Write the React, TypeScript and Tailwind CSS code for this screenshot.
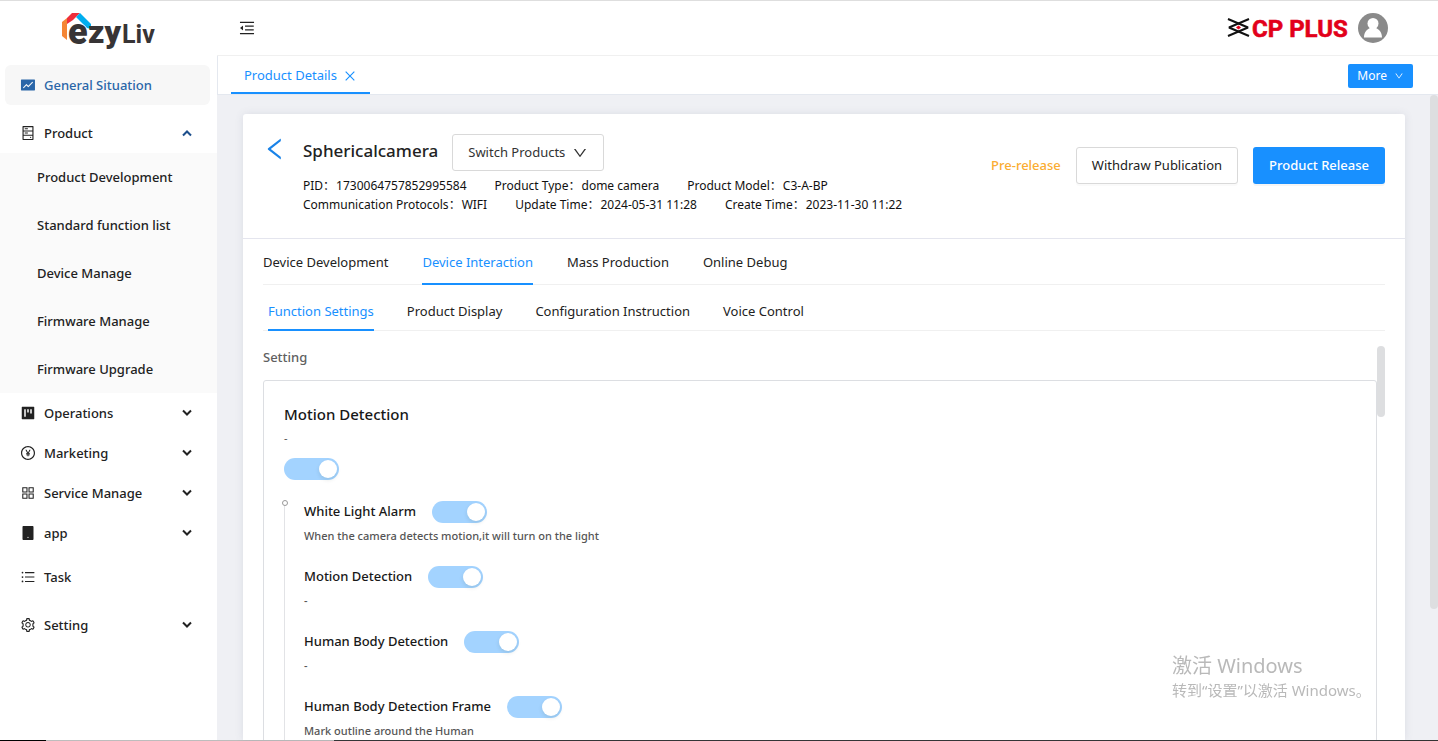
import type { ReactNode } from "react";
import {
  AiFillFund,
  AiFillProject,
  AiFillTablet,
  AiOutlineAppstore,
  AiOutlineClose,
  AiOutlineDown,
  AiOutlineHdd,
  AiOutlineLeft,
  AiOutlineMenuFold,
  AiOutlinePayCircle,
  AiOutlineSetting,
  AiOutlineUnorderedList,
} from "react-icons/ai";

function EzyLivLogo() {
  return (
    <svg width="94" height="42" viewBox="0 0 94 42" role="img" aria-label="ezyLiv">
      <polygon points="1,10 6,6 6,28 1,24" fill="#f58634" />
      <polygon points="6,12 6,6 11,1 19,1 12,8" fill="#ee2e3b" />
      <polygon points="15,5 19,1 30,12 30,17 26,16" fill="#00aeef" />
      <g fontFamily="Roboto, sans-serif" fontWeight="900" fill="#373435">
        <text x="7" y="32" fontSize="36" stroke="#ffffff" strokeWidth="1" paintOrder="stroke">e</text>
        <text x="27" y="31" fontSize="32">zy</text>
        <text x="61" y="31" fontSize="25" fontWeight="700">Liv</text>
      </g>
    </svg>
  );
}

function CpPlusLogo() {
  return (
    <svg width="122" height="30" viewBox="0 0 122 30" role="img" aria-label="CP PLUS">
      <g fill="none" stroke="#111111" strokeWidth="2" strokeLinejoin="bevel">
        <path d="M1 6 L21 14.500 L1 23" />
        <path d="M22 6 L2 14.500 L22 23" />
      </g>
      <path d="M11.500 12.500 L14 14.500 L11.500 16.500 L9 14.500Z" fill="#e2001a" />
      <text
        x="25"
        y="24"
        fontFamily="Roboto, sans-serif"
        fontWeight="700"
        fontSize="24"
        fill="#e2001a"
        stroke="#e2001a"
        strokeWidth="0.600"
      >
        CP PLUS
      </text>
    </svg>
  );
}

function Chevron({ up = false }: { up?: boolean }) {
  return (
    <svg width="10" height="8" viewBox="0 0 10 8" fill="none" stroke={up ? "#1d4f8c" : "#222222"} strokeWidth="2" aria-hidden="true">
      <path d={up ? "M1 6.500 L5 2.500 L9 6.500" : "M1 1.500 L5 5.500 L9 1.500"} />
    </svg>
  );
}

type Item = { label: string; icon: ReactNode; children?: string[]; expandable?: boolean; gap?: string };

const items: Item[] = [
  {
    label: "Product",
    icon: <AiOutlineHdd className="size-4" />,
    gap: "mt-2",
    expandable: true,
    children: ["Product Development", "Standard function list", "Device Manage", "Firmware Manage", "Firmware Upgrade"],
  },
  { label: "Operations", icon: <AiFillProject className="size-4" />, expandable: true },
  { label: "Marketing", icon: <AiOutlinePayCircle className="size-4" />, expandable: true },
  { label: "Service Manage", icon: <AiOutlineAppstore className="size-4" />, expandable: true },
  { label: "app", icon: <AiFillTablet className="size-4" />, expandable: true },
  { label: "Task", icon: <AiOutlineUnorderedList className="size-4" />, gap: "my-1" },
  { label: "Setting", icon: <AiOutlineSetting className="size-4" />, expandable: true, gap: "mt-2" },
];

function Sidebar() {
  return (
    <aside className="flex w-[217px] shrink-0 flex-col bg-white text-[13px] font-medium text-[#222]">
      <div className="flex h-16 items-center pl-[61px]">
        <EzyLivLogo />
      </div>
      <nav aria-label="Main">
        <a href="#general" className="mr-[7px] ml-[5px] flex h-10 items-center gap-2 rounded-md bg-[#f7f7f7] pl-[15px] text-[#2a66a8]">
          <AiFillFund className="size-4" />
          <span className="pt-0.5">General Situation</span>
        </a>
        {items.map((item) => (
          <div key={item.label} className={item.gap}>
            <button
              type="button"
              aria-expanded={item.expandable ? Boolean(item.children) : undefined}
              className="flex h-10 w-full items-center gap-2 pr-[25px] pl-5 text-left"
            >
              {item.icon}
              <span className="flex-1 pt-0.5">{item.label}</span>
              {item.expandable && <Chevron up={Boolean(item.children)} />}
            </button>
            {item.children && (
              <ul className="bg-[#fafafa]">
                {item.children.map((child) => (
                  <li key={child}>
                    <a href="#product" className="flex h-12 items-center pt-0.5 pl-[37px]">
                      {child}
                    </a>
                  </li>
                ))}
              </ul>
            )}
          </div>
        ))}
      </nav>
    </aside>
  );
}

function Tabs({ names, active, className }: { names: string[]; active: string; className: string }) {
  return (
    <div role="tablist" className={`flex h-[46px] shrink-0 border-b border-[#f0f0f0] text-[13px] ${className}`}>
      {names.map((name) => (
        <button
          key={name}
          type="button"
          role="tab"
          aria-selected={name === active}
          className={
            name === active
              ? "-mb-px border-b-2 border-[#1890ff] pt-[inherit] text-[#1890ff]"
              : "-mb-px border-b-2 border-transparent pt-[inherit]"
          }
        >
          {name}
        </button>
      ))}
    </div>
  );
}

function Toggle({ label }: { label: string }) {
  return (
    <label className="relative flex h-[22px] w-[55px] shrink-0 rounded-full bg-[#a3d3ff] p-0.5">
      <input type="checkbox" role="switch" aria-label={label} defaultChecked disabled className="absolute inset-0 appearance-none" />
      <span className="ml-auto size-[18px] rounded-full bg-white shadow-[0_2px_4px_rgba(0,35,11,0.1)]" />
    </label>
  );
}

const settings = [
  ["White Light Alarm", "When the camera detects motion,it will turn on the light"],
  ["Motion Detection", "-"],
  ["Human Body Detection", "-"],
  ["Human Body Detection Frame", "Mark outline around the Human"],
];

const details = [
  [
    ["PID", "1730064757852995584"],
    ["Product Type", "dome camera"],
    ["Product Model", "C3-A-BP"],
  ],
  [
    ["Communication Protocols", "WIFI"],
    ["Update Time", "2024-05-31 11:28"],
    ["Create Time", "2023-11-30 11:22"],
  ],
];

function ProductHeader() {
  return (
    <header className="flex h-[125px] items-start border-b border-[#e4e5ee] pr-5 pl-[18px]">
      <button type="button" aria-label="Back" className="mt-[21px] text-[#1a83e8]">
        <AiOutlineLeft className="size-7" />
      </button>
      <div className="ml-3.5 flex-1 pt-5 whitespace-nowrap">
        <div className="flex items-center gap-3.5">
          <h1 className="pb-1 text-[17px] leading-7 font-medium text-[#222]">Sphericalcamera</h1>
          <button type="button" className="flex h-[37px] items-center gap-[7px] rounded-[3px] border border-[#d9d9d9] px-[15px] text-[13px] text-[#333]">
            Switch Products
            <AiOutlineDown className="size-4" />
          </button>
        </div>
        <dl className="mt-[5px] text-xs text-[#111]">
          {details.map((row, i) => (
            <div key={i} className="flex gap-7 leading-[19px]">
              {row.map(([k, v]) => (
                <div key={k} className="flex gap-px">
                  <dt>{k}：</dt>
                  <dd>{v}</dd>
                </div>
              ))}
            </div>
          ))}
        </dl>
      </div>
      <div className="flex shrink-0 items-center gap-[15px] pt-[33px] text-[13px] whitespace-nowrap">
        <span className="font-medium text-[#faad32]">Pre-release</span>
        <button type="button" className="h-[37px] rounded-[3px] border border-[#d9d9d9] bg-white px-[15px] shadow-[0_2px_0_rgba(0,0,0,0.02)]">
          Withdraw Publication
        </button>
        <button type="button" className="h-[37px] rounded-[3px] bg-[#1890ff] px-4 font-medium text-white shadow-[0_2px_0_rgba(0,0,0,0.04)]">
          Product Release
        </button>
      </div>
    </header>
  );
}

function SettingsPanel() {
  return (
    <section className="relative mx-5 mt-[15px] min-h-0 flex-1 overflow-hidden pr-2">
      <h2 className="h-[34px] text-[13px] leading-[22px] font-medium text-[#606060]">Setting</h2>
      <div className="rounded-[3px] border border-[#dcdee2] px-5 pt-[21px]">
        <h3 className="text-[15px] leading-6 font-medium text-[#181818]">Motion Detection</h3>
        <p className="mt-0.5 mb-2.5 text-[11px] leading-5 text-[#555]">-</p>
        <Toggle label="Motion Detection enabled" />
        <div className="relative mt-[21px] border-l border-[#e2e3e6] pb-10 pl-[19px]">
          <span className="absolute -top-px -left-[3px] size-1.5 rounded-full border border-[#999] bg-white" />
          <ul>
            {settings.map(([name, note]) => (
              <li key={name} className="h-[65px]">
                <div className="flex h-[22px] items-center gap-4">
                  <h4 className="text-[13px] font-medium text-[#181818]">{name}</h4>
                  <Toggle label={name} />
                </div>
                <p className="mt-[3px] text-[11px] leading-5 font-medium text-[#555]">{note}</p>
              </li>
            ))}
          </ul>
        </div>
      </div>
      <div className="absolute top-0 right-0 h-[71px] w-2 rounded-full bg-[#dddee0]" />
    </section>
  );
}

export default function App() {
  return (
    <div className="flex h-screen flex-col overflow-hidden border-t border-[#dedede] bg-white font-['Noto_Sans','Noto_Sans_CJK_SC',sans-serif] text-[#222]">
      <div className="flex min-h-0 flex-1">
        <Sidebar />
        <div className="flex min-w-0 flex-1 flex-col">
          <header className="flex h-[55px] shrink-0 items-center justify-between border-b border-[#f0f0f0] pr-[50px] pl-[21px]">
            <button type="button" aria-label="Collapse menu">
              <AiOutlineMenuFold className="size-[18px]" />
            </button>
            <div className="flex items-center gap-[9px]">
              <CpPlusLogo />
              <svg width="30" height="30" viewBox="0 0 30 30" role="img" aria-label="Account">
                <circle cx="15" cy="15" r="15" fill="#8a8a8a" />
                <circle cx="15" cy="10.500" r="5.500" fill="#ffffff" />
                <path d="M6 24.500 C6 18.500 9.500 16.500 12 15 H18 C20.500 16.500 24 18.500 24 24.500Z" fill="#ffffff" />
              </svg>
            </div>
          </header>
          <div className="flex h-[39px] shrink-0 items-center justify-between border-b border-l border-[#e4e8ef] pr-[25px] pl-[13px]">
            <div role="tablist" className="flex self-stretch">
              <button type="button" role="tab" aria-selected="true" className="flex items-center gap-1.5 border-b-2 border-[#1890ff] px-[13px] pt-[3px] text-[13px] text-[#1890ff]">
                Product Details
                <AiOutlineClose className="size-3.5" />
              </button>
            </div>
            <button type="button" className="mt-0.5 flex h-6 items-center gap-[7px] rounded-xs bg-[#1890ff] px-[9px] text-xs text-white">
              More
              <AiOutlineDown className="size-2.5" />
            </button>
          </div>
          <main className="relative flex min-h-0 flex-1 flex-col bg-[#eff0f4] pt-[19px] pr-[33px] pl-[26px]">
            <div className="flex min-h-0 flex-1 flex-col rounded-t-[3px] bg-white shadow-[0_0_8px_rgba(80,90,120,0.12)]">
              <ProductHeader />
              <Tabs
                className="mx-5 gap-[34px] pt-0.5"
                active="Device Interaction"
                names={["Device Development", "Device Interaction", "Mass Production", "Online Debug"]}
              />
              <Tabs
                className="mx-5 gap-[33px] pt-[5px] pl-[5px]"
                active="Function Settings"
                names={["Function Settings", "Product Display", "Configuration Instruction", "Voice Control"]}
              />
              <SettingsPanel />
            </div>
            <div className="absolute top-0 right-0 h-[514px] w-2 rounded-full bg-[#dddee0]" />
          </main>
        </div>
      </div>
      <div className="flex h-px shrink-0">
        <span className="w-[46px] bg-black" />
        <span className="w-72 bg-[#bdbdbd]" />
        <span className="flex-1 bg-[#333]" />
      </div>
      <div className="pointer-events-none fixed right-[66px] bottom-[41px] w-[200px] whitespace-nowrap text-[#b9b9b9]">
        <p className="text-xl leading-7">激活 Windows</p>
        <p className="text-[15px] leading-5">转到“设置”以激活 Windows。</p>
      </div>
    </div>
  );
}
